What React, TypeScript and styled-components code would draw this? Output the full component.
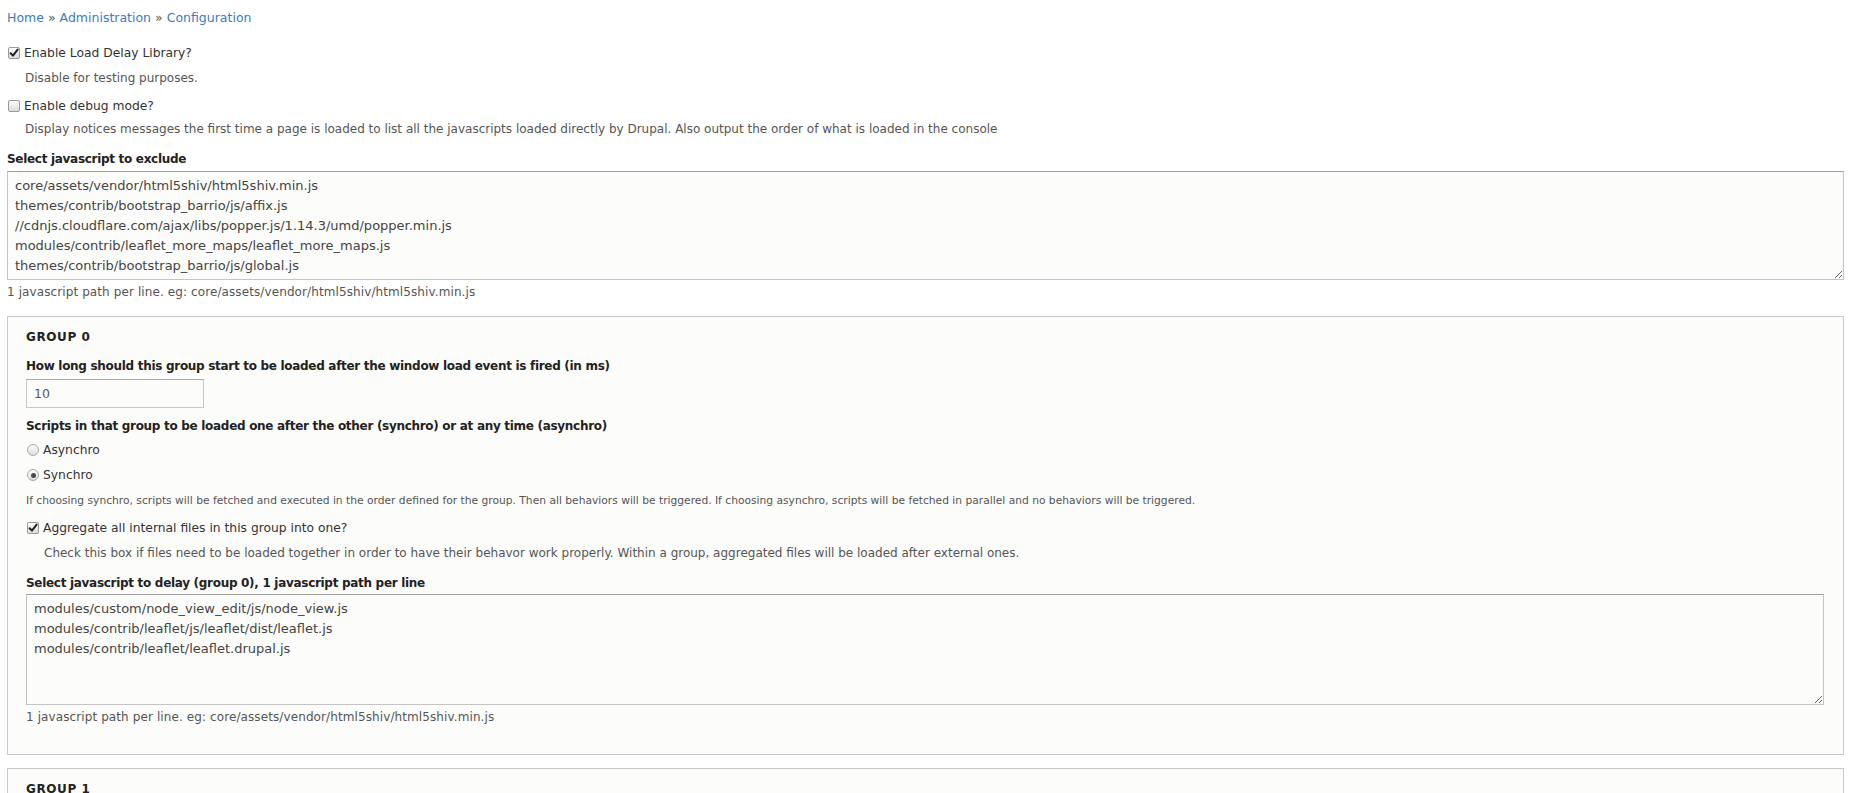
import React from "react";
import styled, { createGlobalStyle } from "styled-components";

const FONT = `"DejaVu Sans", "Liberation Sans", sans-serif`;

const Global = createGlobalStyle`
  html, body { margin: 0; padding: 0; background: #ffffff; }
  body { font-family: ${FONT}; color: #333; }
  * { box-sizing: border-box; }
`;

const Page = styled.div`
  padding: 8px 28px 0 7px;
  display: flex;
  flex-direction: column;
`;

const Breadcrumb = styled.nav`
  font-size: 12.5px;
  line-height: 20px;
  color: #555;
  display: flex;
  gap: 4px;
`;

const Crumb = styled.a`
  color: #3b7bbf;
  text-decoration: none;
`;

const Sep = styled.span`
  color: #555;
`;

const CheckRow = styled.label<{ $mt: number }>`
  display: flex;
  align-items: center;
  gap: 4px;
  margin-top: ${(p) => p.$mt}px;
  padding-left: 1px;
  font-size: 12.3px;
  line-height: 20px;
  color: #333;
  white-space: nowrap;
`;

const Box = styled.span`
  width: 12px;
  height: 12px;
  border: 1px solid #9a9a9a;
  border-radius: 2px;
  background: linear-gradient(#fdfdfd, #dcdcdc);
  display: inline-flex;
  align-items: center;
  justify-content: center;
  flex: none;
`;

const RadioDot = styled.span`
  width: 12px;
  height: 12px;
  border: 1px solid #a8a8a8;
  border-radius: 50%;
  background: linear-gradient(#fdfdfd, #dedede);
  display: inline-flex;
  align-items: center;
  justify-content: center;
  flex: none;
`;

const Inner = styled.span`
  width: 5px;
  height: 5px;
  border-radius: 50%;
  background: #4a4a4a;
`;

const Desc = styled.div<{ $mt: number; $indent: number; $size?: number }>`
  margin-top: ${(p) => p.$mt}px;
  padding-left: ${(p) => p.$indent}px;
  font-size: ${(p) => p.$size ?? 12}px;
  line-height: 18px;
  color: #555;
  white-space: nowrap;
`;

const FieldLabel = styled.div<{ $mt: number }>`
  margin-top: ${(p) => p.$mt}px;
  font-size: 12px;
  line-height: 18px;
  font-weight: 700;
  color: #222;
  letter-spacing: -0.3px;
  white-space: nowrap;
`;

const TextArea = styled.textarea<{ $mt: number; $h: number }>`
  display: block;
  width: 100%;
  height: ${(p) => p.$h}px;
  margin: ${(p) => p.$mt}px 0 0 0;
  padding: 4px 7px;
  border: 1px solid #c4c4c4;
  border-top-color: #9e9e9e;
  border-radius: 0;
  background: #fcfcfa;
  font-family: ${FONT};
  font-size: 13px;
  line-height: 20px;
  color: #444;
  resize: vertical;
  outline: none;
  overflow: hidden;
`;

const Help = styled.div<{ $mt: number }>`
  margin-top: ${(p) => p.$mt}px;
  font-size: 12px;
  line-height: 18px;
  color: #555;
  letter-spacing: 0.1px;
  white-space: nowrap;
`;

const Group = styled.fieldset<{ $mt: number; $pb: number }>`
  margin: ${(p) => p.$mt}px 0 0 0;
  padding: 11px 19px ${(p) => p.$pb}px 18px;
  border: 1px solid #c8c8c8;
  background: #fcfcfa;
  min-width: 0;
  display: flex;
  flex-direction: column;
`;

const GroupTitle = styled.div`
  font-size: 12px;
  line-height: 18px;
  font-weight: 700;
  color: #222;
  letter-spacing: 0.6px;
  text-transform: uppercase;
`;

const NumberInput = styled.input<{ $mt: number }>`
  display: block;
  width: 178px;
  height: 29px;
  margin: ${(p) => p.$mt}px 0 0 0;
  padding: 0 7px;
  border: 1px solid #c8c8c8;
  border-top-color: #a8a8a8;
  border-radius: 0;
  background: #fcfcfa;
  font-family: ${FONT};
  font-size: 12.5px;
  color: #555;
  outline: none;
`;

const RadioRow = styled.label<{ $mt: number }>`
  display: flex;
  align-items: center;
  gap: 4px;
  margin-top: ${(p) => p.$mt}px;
  padding-left: 1px;
  font-size: 12.3px;
  line-height: 20px;
  color: #333;
`;

const Check = () => (
  <svg width="10" height="10" viewBox="0 0 10 10">
    <path d="M1.6 5.2 L4 7.6 L8.6 1.6" fill="none" stroke="#222" strokeWidth="2" strokeLinecap="round" strokeLinejoin="round" />
  </svg>
);

const Checkbox = ({ checked }: { checked: boolean }) => <Box>{checked && <Check />}</Box>;

const Radio = ({ checked }: { checked: boolean }) => <RadioDot>{checked && <Inner />}</RadioDot>;

const excludeList = [
  "core/assets/vendor/html5shiv/html5shiv.min.js",
  "themes/contrib/bootstrap_barrio/js/affix.js",
  "//cdnjs.cloudflare.com/ajax/libs/popper.js/1.14.3/umd/popper.min.js",
  "modules/contrib/leaflet_more_maps/leaflet_more_maps.js",
  "themes/contrib/bootstrap_barrio/js/global.js",
].join("\n");

const delayList = [
  "modules/custom/node_view_edit/js/node_view.js",
  "modules/contrib/leaflet/js/leaflet/dist/leaflet.js",
  "modules/contrib/leaflet/leaflet.drupal.js",
].join("\n");

export default function App() {
  return (
    <>
      <Global />
      <Page>
        <Breadcrumb>
          <Crumb href="#">Home</Crumb>
          <Sep>»</Sep>
          <Crumb href="#">Administration</Crumb>
          <Sep>»</Sep>
          <Crumb href="#">Configuration</Crumb>
        </Breadcrumb>

        <CheckRow $mt={15}>
          <Checkbox checked />
          Enable Load Delay Library?
        </CheckRow>
        <Desc $mt={6} $indent={18}>Disable for testing purposes.</Desc>

        <CheckRow $mt={9}>
          <Checkbox checked={false} />
          Enable debug mode?
        </CheckRow>
        <Desc $mt={4} $indent={18}>
          Display notices messages the first time a page is loaded to list all the javascripts loaded directly by Drupal. Also output the order of what is loaded in the console
        </Desc>

        <FieldLabel $mt={12}>Select javascript to exclude</FieldLabel>
        <TextArea $mt={3} $h={109} defaultValue={excludeList} />
        <Help $mt={3}>1 javascript path per line. eg: core/assets/vendor/html5shiv/html5shiv.min.js</Help>

        <Group $mt={15} $pb={28}>
          <GroupTitle>Group 0</GroupTitle>
          <FieldLabel $mt={11}>How long should this group start to be loaded after the window load event is fired (in ms)</FieldLabel>
          <NumberInput $mt={4} defaultValue="10" />
          <FieldLabel $mt={9}>Scripts in that group to be loaded one after the other (synchro) or at any time (asynchro)</FieldLabel>
          <RadioRow $mt={5}>
            <Radio checked={false} />
            Asynchro
          </RadioRow>
          <RadioRow $mt={5}>
            <Radio checked />
            Synchro
          </RadioRow>
          <Desc $mt={7} $indent={0} $size={10.7}>
            If choosing synchro, scripts will be fetched and executed in the order defined for the group. Then all behaviors will be triggered. If choosing asynchro, scripts will be fetched in parallel and no behaviors will be triggered.
          </Desc>
          <CheckRow $mt={8}>
            <Checkbox checked />
            Aggregate all internal files in this group into one?
          </CheckRow>
          <Desc $mt={6} $indent={18}>
            Check this box if files need to be loaded together in order to have their behavor work properly. Within a group, aggregated files will be loaded after external ones.
          </Desc>
          <FieldLabel $mt={12}>Select javascript to delay (group 0), 1 javascript path per line</FieldLabel>
          <TextArea $mt={2} $h={111} defaultValue={delayList} />
          <Help $mt={3}>1 javascript path per line. eg: core/assets/vendor/html5shiv/html5shiv.min.js</Help>
        </Group>

        <Group $mt={13} $pb={28}>
          <GroupTitle>Group 1</GroupTitle>
        </Group>
      </Page>
    </>
  );
}
